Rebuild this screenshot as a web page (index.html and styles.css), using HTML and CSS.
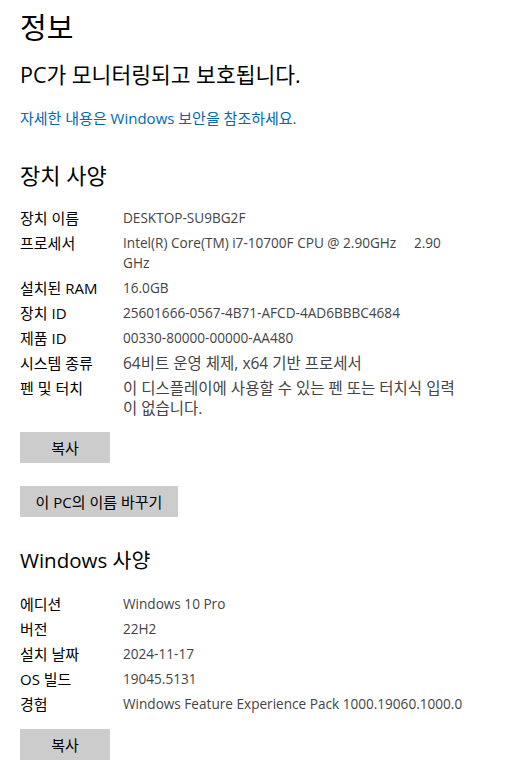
FILE: index.html
```html
<!DOCTYPE html>
<html lang="ko">
<head>
<meta charset="utf-8">
<title>정보</title>
<link rel="stylesheet" href="styles.css">
</head>
<body>
<main class="page">
  <h1 class="title">정보</h1>
  <p class="status">PC가 모니터링되고 보호됩니다.</p>
  <a class="link" href="#">자세한 내용은 Windows 보안을 참조하세요.</a>

  <h2 class="section section-device">장치 사양</h2>
  <dl class="specs">
    <dt>장치 이름</dt><dd class="latin">DESKTOP-SU9BG2F</dd>
    <dt>프로세서</dt><dd class="latin">Intel(R) Core(TM) i7-10700F CPU @ 2.90GHz&nbsp;&nbsp;&nbsp;&nbsp; 2.90 GHz</dd>
    <dt>설치된 RAM</dt><dd class="latin">16.0GB</dd>
    <dt>장치 ID</dt><dd class="latin">25601666-0567-4B71-AFCD-4AD6BBBC4684</dd>
    <dt>제품 ID</dt><dd class="latin">00330-80000-00000-AA480</dd>
    <dt>시스템 종류</dt><dd>64비트 운영 체제, x64 기반 프로세서</dd>
    <dt>펜 및 터치</dt><dd>이 디스플레이에 사용할 수 있는 펜 또는 터치식 입력이 없습니다.</dd>
  </dl>
  <button class="btn btn-copy" type="button">복사</button>
  <button class="btn btn-rename" type="button">이 PC의 이름 바꾸기</button>

  <h2 class="section section-windows">Windows 사양</h2>
  <dl class="specs">
    <dt>에디션</dt><dd class="latin">Windows 10 Pro</dd>
    <dt>버전</dt><dd class="latin">22H2</dd>
    <dt>설치 날짜</dt><dd class="latin">2024-11-17</dd>
    <dt>OS 빌드</dt><dd class="latin">19045.5131</dd>
    <dt>경험</dt><dd class="latin">Windows Feature Experience Pack 1000.19060.1000.0</dd>
  </dl>
  <button class="btn btn-copy btn-last" type="button">복사</button>
</main>
</body>
</html>
```

FILE: styles.css
```css
html, body {
  margin: 0;
  padding: 0;
  background: #ffffff;
}
body {
  font-family: "Open Sans", "Noto Sans CJK KR", sans-serif;
  color: #000000;
}
.page {
  display: flex;
  flex-direction: column;
  align-items: flex-start;
  padding: 8px 0 0 20px;
}
.title {
  margin: 0;
  font-size: 29px;
  font-weight: 400;
  line-height: 40px;
}
.status {
  margin: 13px 0 0;
  font-size: 21.5px;
  line-height: 28px;
}
.link {
  margin-top: 19px;
  font-size: 15px;
  line-height: 20px;
  color: #0067b8;
  text-decoration: none;
}
.section {
  margin: 0;
  font-size: 22px;
  font-weight: 400;
  line-height: 28px;
}
.section-device { margin-top: 33px; }
.section-windows {
  margin-top: 29px;
  font-size: 20.5px;
}
.specs {
  display: grid;
  grid-template-columns: 103px 342px;
  row-gap: 5px;
  margin: 19px 0 0;
  font-size: 15px;
  line-height: 20px;
}
.section-windows + .specs { margin-top: 20px; }
.specs dt {
  color: #000000;
}
.specs dd {
  margin: 0;
  color: #444444;
  font-size: 15.5px;
}
.specs dd.latin {
  font-size: 13.6px;
}
.btn {
  font-family: inherit;
  font-size: 15px;
  line-height: 20px;
  color: #000000;
  background: #cccccc;
  border: none;
  height: 31px;
  padding: 0;
  margin-top: 14px;
}
.btn-copy { width: 90px; }
.btn-rename { width: 158px; margin-top: 23px; }
.btn-last { margin-top: 15px; }
```
